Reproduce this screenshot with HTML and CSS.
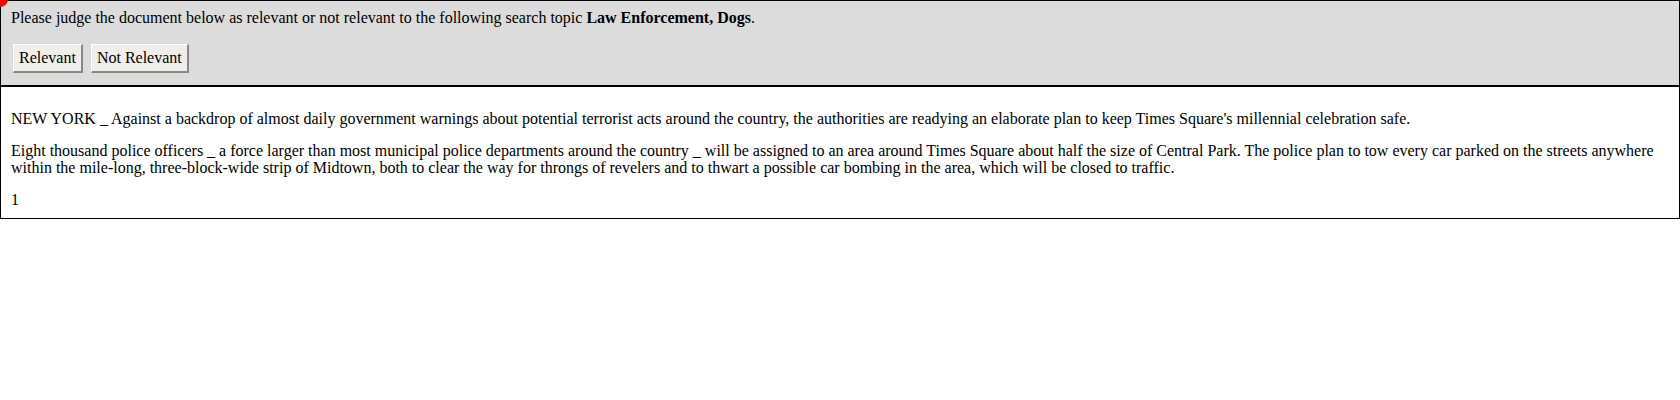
FILE: index.html
```html
<!DOCTYPE html>
<html>
<head>
<meta charset="utf-8">
<link rel="stylesheet" href="styles.css">
</head>
<body>
<div class="dot"></div>
<div class="judge">
  <p class="prompt">Please judge the document below as relevant or not relevant to the following search topic <b>Law Enforcement, Dogs</b>.</p>
  <div class="buttons">
    <button class="btn">Relevant</button>
    <button class="btn">Not Relevant</button>
  </div>
</div>
<div class="doc">
  <p>NEW YORK _ Against a backdrop of almost daily government warnings about potential terrorist acts around the country, the authorities are readying an elaborate plan to keep Times Square's millennial celebration safe.</p>
  <p>Eight thousand police officers _ a force larger than most municipal police departments around the country _ will be assigned to an area around Times Square about half the size of Central Park. The police plan to tow every car parked on the streets anywhere within the mile-long, three-block-wide strip of Midtown, both to clear the way for throngs of revelers and to thwart a possible car bombing in the area, which will be closed to traffic.</p>
  <p>1</p>
</div>
</body>
</html>
```
FILE: styles.css
```css
html, body {
  margin: 0;
  padding: 0;
  background: #fff;
}
body {
  font-family: "Liberation Serif", "Times New Roman", serif;
  font-size: 16px;
  color: #000;
}
.dot {
  position: absolute;
  z-index: 1;
  left: -8px;
  top: -9px;
  width: 16px;
  height: 16px;
  border-radius: 50%;
  background: #f00;
}
.judge {
  background: #dcdcdc;
  border: 1px solid #000;
  padding: 8px 10px 12px;
}
.prompt {
  margin: 0 0 17px;
  line-height: 18px;
}
.buttons {
  display: flex;
  gap: 8px;
  padding-left: 2px;
}
.btn {
  font-family: "Liberation Serif", "Times New Roman", serif;
  font-size: 16px;
  background: #f0eeea;
  border-style: solid;
  border-color: #fff #888 #888 #fff;
  border-width: 1px 2px 2px 1px;
  padding: 4px 5px;
  height: 29px;
  color: #000;
}
.doc {
  border: 1px solid #000;
  padding: 7px 10px 0;
}
.doc p {
  margin: 15px 0 0;
  line-height: 17px;
}
.doc p:first-child {
  margin-top: 16px;
}
.doc p:last-child {
  padding-bottom: 10px;
  margin-bottom: 0;
}
```
